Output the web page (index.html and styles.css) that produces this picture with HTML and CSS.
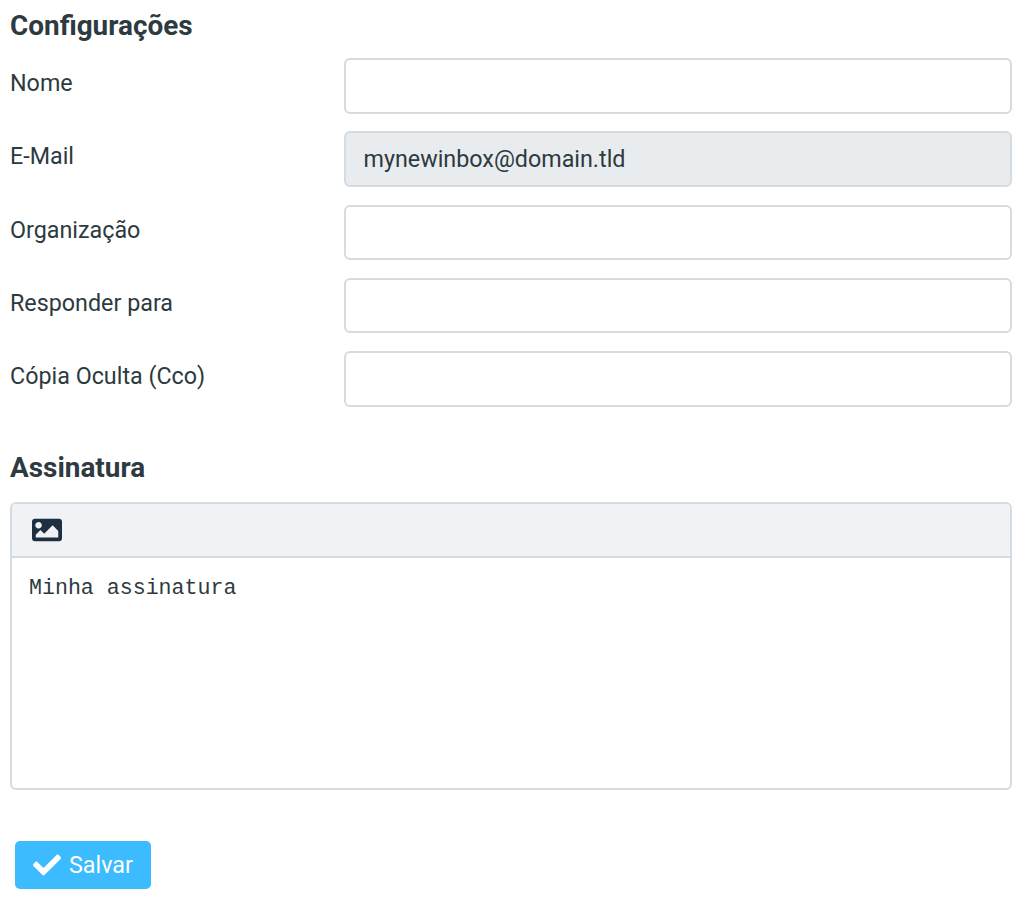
FILE: index.html
```html
<!DOCTYPE html>
<html lang="pt">
<head>
  <meta charset="UTF-8">
  <title>Configurações</title>
  <link rel="stylesheet" href="styles.css">
</head>
<body>
  <form class="settings">
    <h2 class="section-title">Configurações</h2>

    <div class="rows">
      <div class="row">
        <label class="row-label">Nome</label>
        <input class="field" type="text">
      </div>
      <div class="row">
        <label class="row-label">E-Mail</label>
        <input class="field" type="text" value="mynewinbox@domain.tld" disabled>
      </div>
      <div class="row">
        <label class="row-label">Organização</label>
        <input class="field" type="text">
      </div>
      <div class="row">
        <label class="row-label">Responder para</label>
        <input class="field" type="text">
      </div>
      <div class="row">
        <label class="row-label">Cópia Oculta (Cco)</label>
        <input class="field" type="text">
      </div>
    </div>

    <h2 class="section-title signature-title">Assinatura</h2>

    <div class="editor">
      <div class="editor-toolbar">
        <svg class="image-icon" viewBox="0 0 512 512">
          <path d="M464 448H48c-26.51 0-48-21.49-48-48V112c0-26.51 21.49-48 48-48h416c26.51 0 48 21.49 48 48v288c0 26.51-21.49 48-48 48zM112 120c-30.928 0-56 25.072-56 56s25.072 56 56 56 56-25.072 56-56-25.072-56-56-56zM64 384h384V272l-87.515-87.515c-4.686-4.686-12.284-4.686-16.971 0L208 320l-55.515-55.515c-4.686-4.686-12.284-4.686-16.971 0L64 336v48z"/>
        </svg>
      </div>
      <div class="editor-body">Minha assinatura</div>
    </div>

    <button class="save-button" type="button">
      <svg class="check-icon" viewBox="0 0 512 512">
        <path d="M173.898 439.404l-166.4-166.4c-9.997-9.997-9.997-26.206 0-36.204l36.203-36.204c9.997-9.998 26.207-9.998 36.204 0L192 312.69 432.095 72.596c9.997-9.997 26.207-9.997 36.204 0l36.203 36.204c9.997 9.997 9.997 26.206 0 36.204l-294.4 294.401c-9.998 9.997-26.207 9.997-36.204-.001z"/>
      </svg>
      Salvar
    </button>
  </form>
</body>
</html>
```

FILE: styles.css
```css
* {
  margin: 0;
  padding: 0;
  box-sizing: border-box;
}

body {
  font-family: Roboto, "Liberation Sans", sans-serif;
  font-size: 23.3px;
  color: #2d3a40;
  background-color: #fff;
}

.settings {
  padding: 10px 12px 0 10px;
}

/* Заголовки */
.section-title {
  font-size: 27.9px;
  font-weight: 700;
  line-height: 32px;
}

.signature-title {
  margin-top: 45px;
  margin-bottom: 18px;
}

/* Строки формы */
.rows {
  display: flex;
  flex-direction: column;
  gap: 17.75px;
  margin-top: 16px;
}

.row {
  display: grid;
  grid-template-columns: 334px 1fr;
}

.row-label {
  line-height: 51px;
}

.field {
  width: 100%;
  height: 55.5px;
  padding: 0 17.5px;
  font-family: inherit;
  font-size: 23.3px;
  color: #2d3a40;
  background-color: #fff;
  border: 2px solid #d4dbe1;
  border-radius: 6px;
}

.field:disabled {
  background-color: #e9ecef;
  opacity: 1;
}

/* Редактор подписи */
.editor {
  height: 288px;
  border: 2px solid #d4dbe1;
  border-radius: 6px;
  overflow: hidden;
}

.editor-toolbar {
  display: flex;
  align-items: center;
  height: 54px;
  padding-left: 20px;
  background-color: #f0f2f5;
  border-bottom: 2px solid #d4dbe1;
}

.image-icon {
  width: 30px;
  height: 30px;
  fill: #1f2f42;
}

.editor-body {
  padding: 17px 17px;
  font-family: "Liberation Mono", monospace;
  font-size: 21.6px;
  line-height: 26px;
  color: #2d3a40;
}

/* Кнопка */
.save-button {
  display: flex;
  align-items: center;
  gap: 8px;
  width: 136px;
  height: 48px;
  margin: 51px 0 0 5px;
  padding-left: 18px;
  font-family: inherit;
  font-size: 23.3px;
  color: #fff;
  background-color: #3dbbff;
  border: none;
  border-radius: 5px;
}

.check-icon {
  width: 28px;
  height: 28px;
  fill: #fff;
}
```
